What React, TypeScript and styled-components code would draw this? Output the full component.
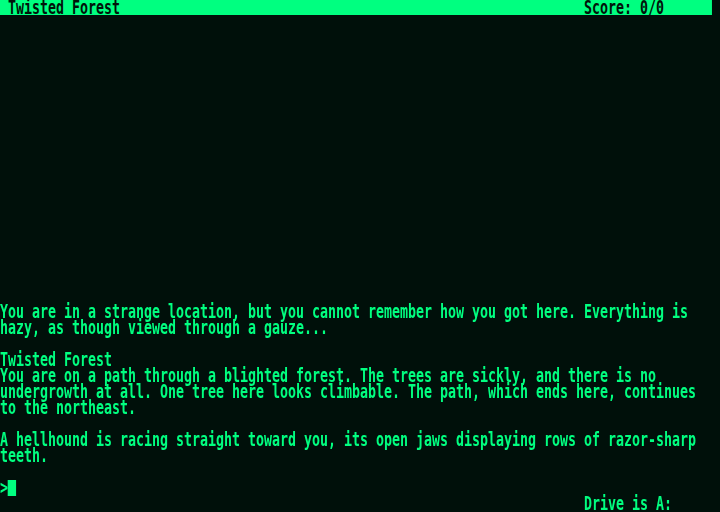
import React from "react";
import styled, { createGlobalStyle } from "styled-components";

const COLS = 90;
const FONT = 19;
const COL = FONT * 0.60205; // DejaVu Sans Mono advance
const SCALE = 720 / (COLS * COL);
const GREEN = "#00ff80";
const BG = "#00100a";

const Global = createGlobalStyle`
  html, body { margin: 0; padding: 0; background: ${BG}; overflow: hidden; }
`;

const Viewport = styled.div`
  width: 720px;
  height: 512px;
  overflow: hidden;
  background: ${BG};
`;

const Screen = styled.div`
  width: ${COLS * COL}px;
  height: 512px;
  transform: scaleX(${SCALE});
  transform-origin: left top;
  display: flex;
  flex-direction: column;
  font-family: "DejaVu Sans Mono", "Liberation Mono", monospace;
  font-size: ${FONT}px;
  font-weight: bold;
  line-height: 14px;
  color: ${GREEN};
  white-space: pre;
`;

const StatusRow = styled.div`
  height: 16px;
  flex: none;
`;

const StatusBar = styled.div`
  width: ${89 * COL}px;
  height: 15px;
  background: ${GREEN};
  color: #00140a;
  display: flex;
  justify-content: space-between;
  padding: 0 ${6 * COL}px 0 ${COL}px;
  box-sizing: border-box;
  overflow: hidden;
`;

const Output = styled.div`
  flex: 1;
  display: flex;
  flex-direction: column;
  justify-content: flex-end;
`;

const Line = styled.div<{ $indent?: number }>`
  height: 16px;
  padding-left: ${(p) => (p.$indent ?? 0) * COL}px;
`;

const Cursor = styled.span`
  display: inline-block;
  width: ${COL}px;
  height: 16px;
  background: ${GREEN};
  vertical-align: top;
`;

const PromptLine = styled.div`
  height: 16px;
  display: flex;
  align-items: flex-start;
`;

const text = [
  "You are in a strange location, but you cannot remember how you got here. Everything is",
  "hazy, as though viewed through a gauze...",
  "",
  "Twisted Forest",
  "You are on a path through a blighted forest. The trees are sickly, and there is no",
  "undergrowth at all. One tree here looks climbable. The path, which ends here, continues",
  "to the northeast.",
  "",
  "A hellhound is racing straight toward you, its open jaws displaying rows of razor-sharp",
  "teeth.",
  "",
];

export default function App() {
  return (
    <Viewport>
      <Global />
      <Screen>
        <StatusRow>
          <StatusBar>
            <span>Twisted Forest</span>
            <span>Score: 0/0</span>
          </StatusBar>
        </StatusRow>
        <Output>
          {text.map((t, i) => (
            <Line key={i}>{t}</Line>
          ))}
          <PromptLine>
            <span>&gt;</span>
            <Cursor />
          </PromptLine>
        </Output>
        <Line $indent={73}>Drive is A:</Line>
      </Screen>
    </Viewport>
  );
}
